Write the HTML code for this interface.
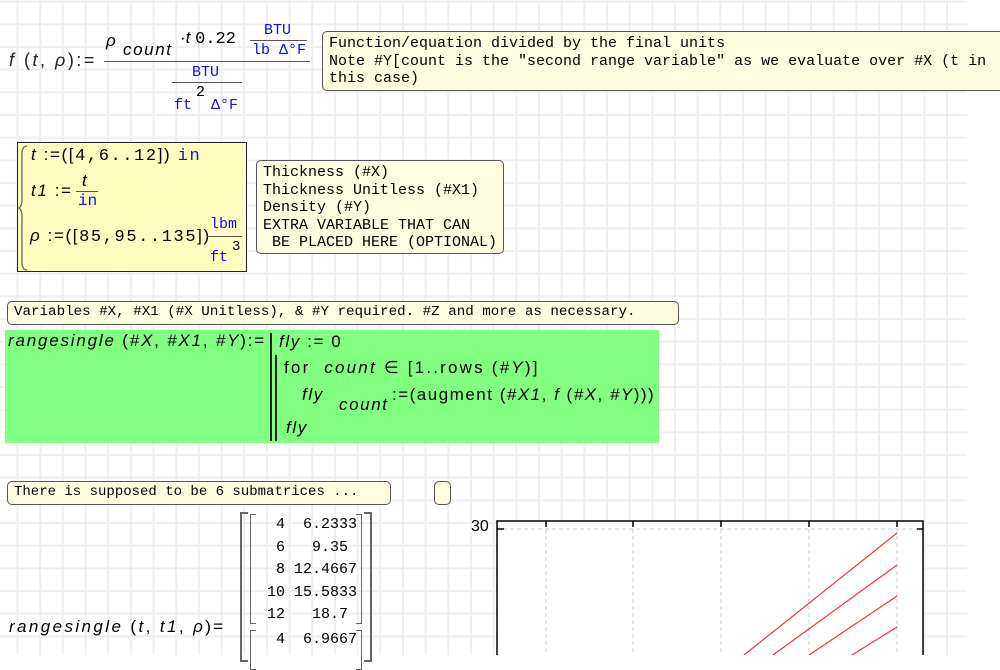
<!DOCTYPE html>
<html><head><meta charset="utf-8"><style>
*{margin:0;padding:0;box-sizing:border-box}
body{width:1000px;height:655px;overflow:hidden;background:#fff;position:relative;font-family:"Liberation Sans",sans-serif}
#grid{position:absolute;left:0;top:0;width:967px;height:655px;
background-image:linear-gradient(to right,#efefef 0 2px,transparent 2px),linear-gradient(to bottom,#efefef 0 2px,transparent 2px);
background-size:22.68px 22.68px;background-position:16.5px 0.6px}
.a{position:absolute;white-space:pre}
.note{position:absolute;background:#fffde0;border:1px solid #555;border-radius:5px;font-family:"Liberation Mono",monospace;font-size:15px;line-height:17.5px;color:#000;padding:2px 6px;white-space:pre}
.m{font-family:"Liberation Mono",monospace}
.i{font-style:italic}
.b{color:#1010ee}
.s{font-family:"Liberation Sans",sans-serif}
.ls{letter-spacing:1.6px}
.hl{position:absolute;height:1px;background:#555}
</style></head><body>
<div id="grid"></div>

<div class="a i s ls" style="left:9px;top:50px;font-size:18px;color:#222;letter-spacing:2.5px">f<span style="font-style:normal"> (</span>t<span style="font-style:normal">, </span>ρ<span style="font-style:normal">):=</span></div>
<div class="a i s" style="left:106px;top:31px;font-size:17px">ρ</div>
<div class="a i s ls" style="left:123px;top:40px;font-size:17px">count</div>
<div class="a s" style="left:180px;top:28px;font-size:17px">·<i>t</i> <span class="m">0.22</span></div>
<div class="a m b" style="left:264px;top:22px;font-size:15px">BTU</div>
<div class="hl" style="left:250px;top:40px;width:57px"></div>
<div class="a m b" style="left:252px;top:42px;font-size:15px">lb Δ°F</div>
<div class="hl" style="left:104px;top:61px;width:206px"></div>
<div class="a m b" style="left:192px;top:64px;font-size:15px">BTU</div>
<div class="hl" style="left:172px;top:82px;width:70px"></div>
<div class="a m" style="left:196px;top:84px;font-size:15px">2</div>
<div class="a m b" style="left:174px;top:97px;font-size:15px">ft</div>
<div class="a m b" style="left:211px;top:97px;font-size:15px">Δ°F</div>

<div class="note" style="left:322px;top:31px;width:690px;height:60px;padding-top:3px">Function/equation divided by the final units
Note #Y[count is the "second range variable" as we evaluate over #X (t in
this case)</div>

<div style="position:absolute;left:17px;top:142px;width:230px;height:130px;background:#fffcc0;border:1px solid #222"></div>
<svg style="position:absolute;left:18px;top:144px" width="12" height="128"><path d="M9 2 Q4 2 4 10 L4 56 Q4 62 1 64 Q4 66 4 72 L4 118 Q4 126 9 126" fill="none" stroke="#666" stroke-width="1.3"/></svg>
<div class="a s ls" style="left:31px;top:145px;font-size:17px"><i>t</i> :=([<span class="m">4,6..12</span>]) <span class="m b">in</span></div>
<div class="a s ls" style="left:31px;top:181px;font-size:17px"><i>t1</i> :=</div>
<div class="a i s" style="left:82px;top:171px;font-size:17px">t</div>
<div class="hl" style="left:76px;top:191px;width:22px"></div>
<div class="a m b" style="left:78px;top:192px;font-size:16px">in</div>
<div class="a s ls" style="left:30px;top:226px;font-size:17px"><i>ρ</i> :=([<span class="m">85,95..135</span>])</div>
<div class="a m b" style="left:210px;top:216px;font-size:15px">lbm</div>
<div class="hl" style="left:207px;top:236px;width:35px"></div>
<div class="a m" style="left:232px;top:239px;font-size:14px">3</div>
<div class="a m b" style="left:210px;top:249px;font-size:15px">ft</div>

<div class="note" style="left:256px;top:160px;width:248px;height:94px;padding-top:3px">Thickness (#X)
Thickness Unitless (#X1)
Density (#Y)
EXTRA VARIABLE THAT CAN
 BE PLACED HERE (OPTIONAL)</div>

<div class="note" style="left:7px;top:301px;width:672px;height:24px;font-size:14.2px;padding-top:2px">Variables #X, #X1 (#X Unitless), &amp; #Y required. #Z and more as necessary.</div>

<div style="position:absolute;left:5px;top:330px;width:654px;height:113px;background:#80ff80"></div>
<div class="a s" style="left:8px;top:331px;font-size:17px;letter-spacing:1.8px"><i>rangesingle</i> (<i>#X</i>, <i>#X1</i>, <i>#Y</i>):=</div>
<div style="position:absolute;left:270px;top:333px;width:2px;height:108px;background:#222"></div>
<div style="position:absolute;left:275px;top:355px;width:2px;height:86px;background:#222"></div>
<div class="a s ls" style="left:279px;top:332px;font-size:17px"><i>fly</i> := 0</div>
<div class="a s" style="left:284px;top:358px;font-size:17px;letter-spacing:2.2px">for &nbsp;<i>count</i> ∈ [1..rows (<i>#Y</i>)]</div>
<div class="a i s ls" style="left:302px;top:385px;font-size:17px">fly</div>
<div class="a i s ls" style="left:339px;top:395px;font-size:17px">count</div>
<div class="a s" style="left:392px;top:385px;font-size:17px;letter-spacing:1.5px">:=(augment (<i>#X1</i>, <i>f</i> (<i>#X</i>, <i>#Y</i>)))</div>
<div class="a i s ls" style="left:286px;top:418px;font-size:17px">fly</div>

<div class="note" style="left:7px;top:481px;width:384px;height:24px;padding-top:2px;font-size:14px">There is supposed to be 6 submatrices ...</div>
<div class="note" style="left:434px;top:481px;width:17px;height:24px"></div>

<div class="a s" style="left:9px;top:617px;font-size:17px;letter-spacing:2.4px"><i>rangesingle</i> (<i>t</i>, <i>t1</i>, <i>ρ</i>)=</div>
<div style="position:absolute;left:240px;top:512px;width:8px;height:150px;border:2px solid #666;border-right:none"></div>
<div style="position:absolute;left:364px;top:512px;width:8px;height:150px;border:2px solid #666;border-left:none"></div>
<div style="position:absolute;left:250px;top:514px;width:6px;height:110px;border:1px solid #666;border-right:none"></div>
<div style="position:absolute;left:356px;top:514px;width:6px;height:110px;border:1px solid #666;border-left:none"></div>
<div style="position:absolute;left:250px;top:630px;width:6px;height:40px;border:1px solid #666;border-right:none"></div>
<div style="position:absolute;left:356px;top:630px;width:6px;height:40px;border:1px solid #666;border-left:none"></div>
<div class="a m" style="left:258px;top:514px;font-size:15px;line-height:22.6px">  4  6.2333
  6   9.35
  8 12.4667
 10 15.5833
 12   18.7</div>
<div class="a m" style="left:258px;top:631px;font-size:15px">  4  6.9667</div>

<div class="a s" style="left:471px;top:518px;font-size:16px">30</div>
<svg style="position:absolute;left:0;top:0" width="1000" height="655">
<rect x="497" y="521" width="426" height="140" fill="#fff" stroke="#000" stroke-width="1.5"/>
<g stroke="#ccc" stroke-dasharray="4,3" stroke-width="1">
<line x1="503" y1="529" x2="923" y2="529"/>
<line x1="546" y1="529" x2="546" y2="655"/>
<line x1="633" y1="529" x2="633" y2="655"/>
<line x1="721" y1="529" x2="721" y2="655"/>
<line x1="809" y1="529" x2="809" y2="655"/>
<line x1="897" y1="529" x2="897" y2="655"/>
</g>
<g stroke="#000" stroke-width="1.5">
<line x1="546" y1="521" x2="546" y2="527"/><line x1="633" y1="521" x2="633" y2="527"/>
<line x1="721" y1="521" x2="721" y2="527"/><line x1="809" y1="521" x2="809" y2="527"/>
<line x1="897" y1="521" x2="897" y2="527"/>
<line x1="497" y1="529" x2="504" y2="529"/><line x1="917" y1="529" x2="923" y2="529"/>
</g>
<g stroke="#ff3030" stroke-width="1.2">
<line x1="897" y1="533" x2="744" y2="655"/>
<line x1="897" y1="565" x2="773" y2="655"/>
<line x1="897" y1="596" x2="809" y2="655"/>
<line x1="897" y1="627" x2="852" y2="655"/>
</g>
</svg>
</body></html>
